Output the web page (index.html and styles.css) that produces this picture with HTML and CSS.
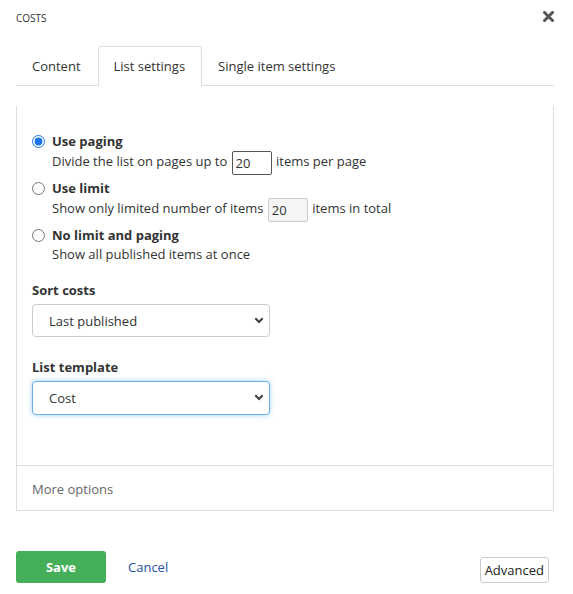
FILE: index.html
```html
<!DOCTYPE html>
<html>
<head>
<meta charset="utf-8">
<link rel="stylesheet" href="styles.css">
</head>
<body>
<div class="modal">
  <div class="header">
    <span class="title">COSTS</span>
    <span class="close" aria-label="close">
      <svg width="11" height="11" viewBox="0 0 11 11"><path d="M1.5 1.5 L9.5 9.5 M9.5 1.5 L1.5 9.5" stroke="#555" stroke-width="3" stroke-linecap="square"/></svg>
    </span>
  </div>
  <div class="tabs">
    <div class="tab">Content</div>
    <div class="tab active">List settings</div>
    <div class="tab">Single item settings</div>
  </div>
  <div class="panel">
    <div class="panel-body">
      <div class="option">
        <input class="radio" type="radio" name="mode" checked>
        <div class="option-text">
          <div class="option-title">Use paging</div>
          <div class="option-desc">Divide the list on pages up to <input class="num" type="text" value="20"> items per page</div>
        </div>
      </div>
      <div class="option">
        <input class="radio" type="radio" name="mode">
        <div class="option-text">
          <div class="option-title">Use limit</div>
          <div class="option-desc">Show only limited number of items <input class="num disabled" type="text" value="20"> items in total</div>
        </div>
      </div>
      <div class="option">
        <input class="radio" type="radio" name="mode">
        <div class="option-text">
          <div class="option-title">No limit and paging</div>
          <div class="option-desc">Show all published items at once</div>
        </div>
      </div>
      <div class="field first-field">
        <div class="field-label">Sort costs</div>
        <div class="select-wrap">
          <select class="select"><option>Last published</option></select>
          <svg class="chev" width="10" height="7" viewBox="0 0 10 7"><path d="M1.3 1.3 L5 5 L8.7 1.3" fill="none" stroke="#444" stroke-width="2.2"/></svg>
        </div>
      </div>
      <div class="field">
        <div class="field-label">List template</div>
        <div class="select-wrap">
          <select class="select focused"><option>Cost</option></select>
          <svg class="chev" width="10" height="7" viewBox="0 0 10 7"><path d="M1.3 1.3 L5 5 L8.7 1.3" fill="none" stroke="#444" stroke-width="2.2"/></svg>
        </div>
      </div>
    </div>
    <div class="panel-footer">More options</div>
  </div>
  <div class="actions">
    <div class="actions-left">
      <button class="btn-save">Save</button>
      <a class="cancel">Cancel</a>
    </div>
    <button class="btn-advanced">Advanced</button>
  </div>
</div>
</body>
</html>
```

FILE: styles.css
```css
* { box-sizing: border-box; }
html, body { margin: 0; padding: 0; background: #fff; }
body {
  font-family: "Open Sans", "Noto Sans", sans-serif;
  font-size: 13px;
  color: #333;
}
.modal {
  width: 554px;
  padding: 0 0 0 16px;
}
.header {
  height: 46px;
  display: flex;
  justify-content: space-between;
  align-items: flex-start;
  padding-top: 10px;
}
.title {
  font-size: 10px;
  line-height: 16px;
  color: #333;
}
.close {
  display: flex;
  margin-top: 1px;
  margin-right: 0;
}
.tabs {
  display: flex;
  border-bottom: 1px solid #ddd;
  height: 40px;
}
.tab {
  padding: 0 16px 0 15px;
  line-height: 38px;
  border: 1px solid transparent;
  border-bottom: none;
  border-radius: 4px 4px 0 0;
  color: #333;
}
.tab.active {
  border-color: #ddd;
  background: #fff;
  height: 40px;
  margin-bottom: -1px;
}
.panel {
  margin-top: 20px;
  border: 1px solid #ddd;
  border-top: none;
}
.panel-body {
  padding: 25px 15px 50px;
}
.option {
  display: flex;
  align-items: flex-start;
  margin-bottom: 3px;
}
.radio {
  margin: 4px 7px 0 0;
  width: 13px;
  height: 13px;
  flex: none;
  accent-color: #1a73e8;
}
.option-title {
  font-weight: 700;
  line-height: 20px;
}
.option-desc {
  line-height: 18px;
}
.num {
  font-family: inherit;
  font-size: 13px;
  color: #333;
  width: 40px;
  height: 24px;
  padding: 2px 3px;
  border: 1px solid #555;
  border-radius: 2px;
  vertical-align: middle;
  margin: 0 1px;
}
.num.disabled {
  background: #f5f5f5;
  border-color: #ccc;
}
.field {
  margin-top: 20px;
  width: 238px;
}
.first-field { margin-top: 17px; }
.field-label {
  font-weight: 700;
  line-height: 20px;
  margin-bottom: 4px;
}
.select-wrap {
  position: relative;
}
.select {
  appearance: none;
  -webkit-appearance: none;
  width: 238px;
  height: 33px;
  padding: 0 16px;
  font-family: inherit;
  font-size: 13px;
  color: #333;
  background: #fff;
  border: 1px solid #ccc;
  border-radius: 4px;
  outline: none;
}
.select.focused {
  height: 34px;
  border-color: #66afe9;
  box-shadow: 0 0 5px rgba(102, 175, 233, 0.6);
}
.chev {
  position: absolute;
  right: 6px;
  top: 13px;
  pointer-events: none;
}
.panel-footer {
  border-top: 1px solid #ddd;
  padding: 14px 15px 12px;
  line-height: 18px;
  color: #666;
}
.actions {
  margin-top: 40px;
  display: flex;
  justify-content: space-between;
  align-items: flex-end;
  padding-right: 5px;
}
.actions-left {
  display: flex;
  align-items: center;
}
.btn-save {
  width: 90px;
  height: 32px;
  background: #44af58;
  color: #fff;
  font-family: inherit;
  font-size: 13px;
  font-weight: 700;
  border: none;
  border-radius: 3px;
}
.cancel {
  margin-left: 22px;
  color: #24509f;
  line-height: 18px;
}
.btn-advanced {
  height: 26px;
  padding: 0 4px;
  font-family: inherit;
  font-size: 13px;
  color: #222;
  background: #fff;
  border: 1px solid #ccc;
  border-radius: 3px;
}
```
